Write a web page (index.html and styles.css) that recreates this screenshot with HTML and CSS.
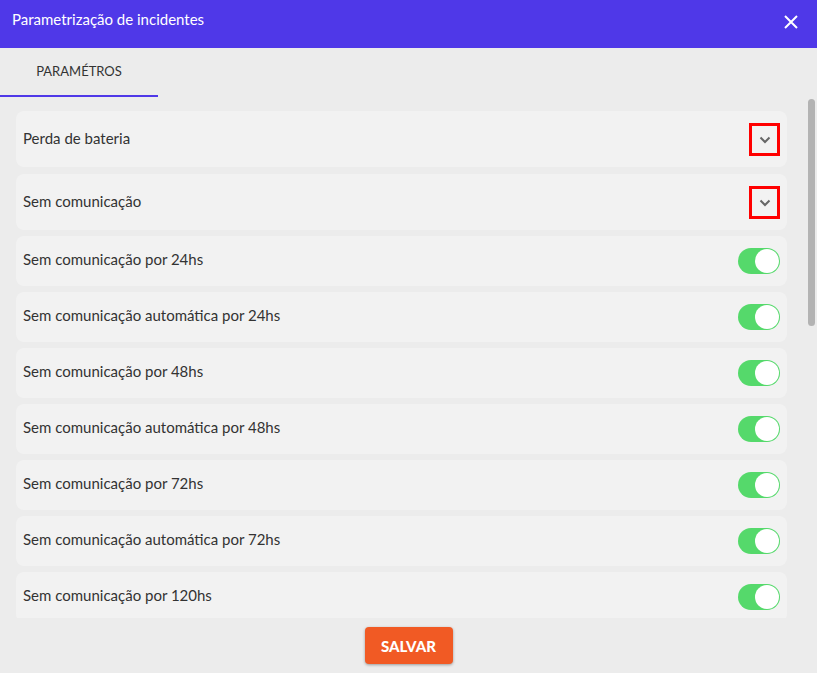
FILE: index.html
```html
<!DOCTYPE html>
<html lang="pt-BR">
<head>
  <meta charset="UTF-8">
  <meta name="viewport" content="width=device-width, initial-scale=1.0">
  <title>Parametrização de incidentes</title>
  <link rel="stylesheet" href="styles.css">
</head>
<body>
  <div class="dialog">
    <div class="dialog-header">
      <span class="dialog-title">Parametrização de incidentes</span>
      <button class="close-btn" aria-label="Fechar">
        <svg width="14" height="14" viewBox="0 0 14 14"><path d="M1 1 L13 13 M13 1 L1 13" stroke="#fff" stroke-width="2" fill="none"/></svg>
      </button>
    </div>

    <div class="tabs">
      <div class="tab active">PARAMÉTROS</div>
    </div>

    <div class="content">
      <div class="list">
        <div class="row accordion">
          <span>Perda de bateria</span>
          <span class="expand"><svg width="12" height="8" viewBox="0 0 12 8"><path d="M1.5 1.5 L6 6 L10.5 1.5" stroke="#666" stroke-width="2" fill="none"/></svg></span>
        </div>
        <div class="row accordion">
          <span>Sem comunicação</span>
          <span class="expand"><svg width="12" height="8" viewBox="0 0 12 8"><path d="M1.5 1.5 L6 6 L10.5 1.5" stroke="#666" stroke-width="2" fill="none"/></svg></span>
        </div>

        <div class="row"><span>Sem comunicação por 24hs</span><span class="switch on"></span></div>
        <div class="row"><span>Sem comunicação automática por 24hs</span><span class="switch on"></span></div>
        <div class="row"><span>Sem comunicação por 48hs</span><span class="switch on"></span></div>
        <div class="row"><span>Sem comunicação automática por 48hs</span><span class="switch on"></span></div>
        <div class="row"><span>Sem comunicação por 72hs</span><span class="switch on"></span></div>
        <div class="row"><span>Sem comunicação automática por 72hs</span><span class="switch on"></span></div>
        <div class="row"><span>Sem comunicação por 120hs</span><span class="switch on"></span></div>
      </div>

      <!-- barra de rolagem da lista -->
      <div class="scrollbar">
        <div class="scroll-thumb"></div>
      </div>
    </div>

    <div class="dialog-footer">
      <button class="save-btn">SALVAR</button>
    </div>
  </div>
</body>
</html>
```

FILE: styles.css
```css
html, body {
  height: 100%;
}
body {
  margin: 0;
  font-family: Lato, "Open Sans", sans-serif;
  background-color: #ececec;
  color: #333;
}
.dialog {
  height: 100vh;
  display: flex;
  flex-direction: column;
  background-color: #ececec;
}
.dialog-header {
  height: 48px;
  flex-shrink: 0;
  box-sizing: border-box;
  padding: 9px 12px 0 12px;
  display: flex;
  justify-content: space-between;
  align-items: flex-start;
  background-color: #4f38e8;
  color: white;
}
.dialog-title {
  font-size: 15px;
  line-height: 20px;
}
.close-btn {
  background: none;
  border: none;
  padding: 0;
  margin: 6px 7px 0 0;
  width: 14px;
  height: 14px;
  cursor: pointer;
  display: flex;
}
.tabs {
  height: 49px;
  flex-shrink: 0;
  display: flex;
}
.tab {
  width: 158px;
  box-sizing: border-box;
  display: flex;
  align-items: center;
  justify-content: center;
  font-size: 13px;
  color: #333;
  padding-bottom: 1px;
}
.tab.active {
  border-bottom: 2px solid #4f38e8;
}
.content {
  flex: 1;
  min-height: 0;
  display: flex;
}
.list {
  flex: 1;
  overflow: hidden;
  padding: 14px 21px 0 16px;
}
.scrollbar {
  width: 7px;
  margin-right: 2px;
  padding-top: 2px;
}
.scroll-thumb {
  height: 227px;
  background-color: #b3b3b3;
  border-radius: 4px;
}
.row {
  height: 50px;
  margin-bottom: 6px;
  padding: 0 7px 4px 7px;
  box-sizing: border-box;
  display: flex;
  align-items: center;
  justify-content: space-between;
  background-color: #f2f2f2;
  border-radius: 8px;
  font-size: 15px;
}
.row .switch {
  margin-top: 4px;
}
.row.accordion {
  height: 56px;
  margin-bottom: 7px;
  padding-bottom: 2px;
}
.row.accordion:nth-child(2) {
  margin-bottom: 6px;
}
.expand {
  width: 31px;
  height: 33px;
  box-sizing: border-box;
  border: 3px solid #ff0000;
  display: flex;
  align-items: center;
  justify-content: center;
  padding-top: 2px;
  margin-top: 2px;
}
.switch {
  position: relative;
  width: 42px;
  height: 26px;
  border-radius: 13px;
  background-color: #e0e0e0;
}
.switch.on {
  background-color: #55d96b;
}
.switch::after {
  content: "";
  position: absolute;
  top: 1px;
  left: 1px;
  width: 24px;
  height: 24px;
  border-radius: 50%;
  background-color: white;
}
.switch.on::after {
  left: 17px;
}
.dialog-footer {
  height: 55px;
  flex-shrink: 0;
  display: flex;
  justify-content: center;
  padding-top: 9px;
  box-sizing: border-box;
}
.save-btn {
  width: 88px;
  height: 37px;
  border: none;
  border-radius: 4px;
  background-color: #f15a24;
  color: white;
  font-family: inherit;
  font-size: 15px;
  font-weight: 900;
  box-shadow: 0 1px 3px rgba(0, 0, 0, 0.35);
  cursor: pointer;
}
```
